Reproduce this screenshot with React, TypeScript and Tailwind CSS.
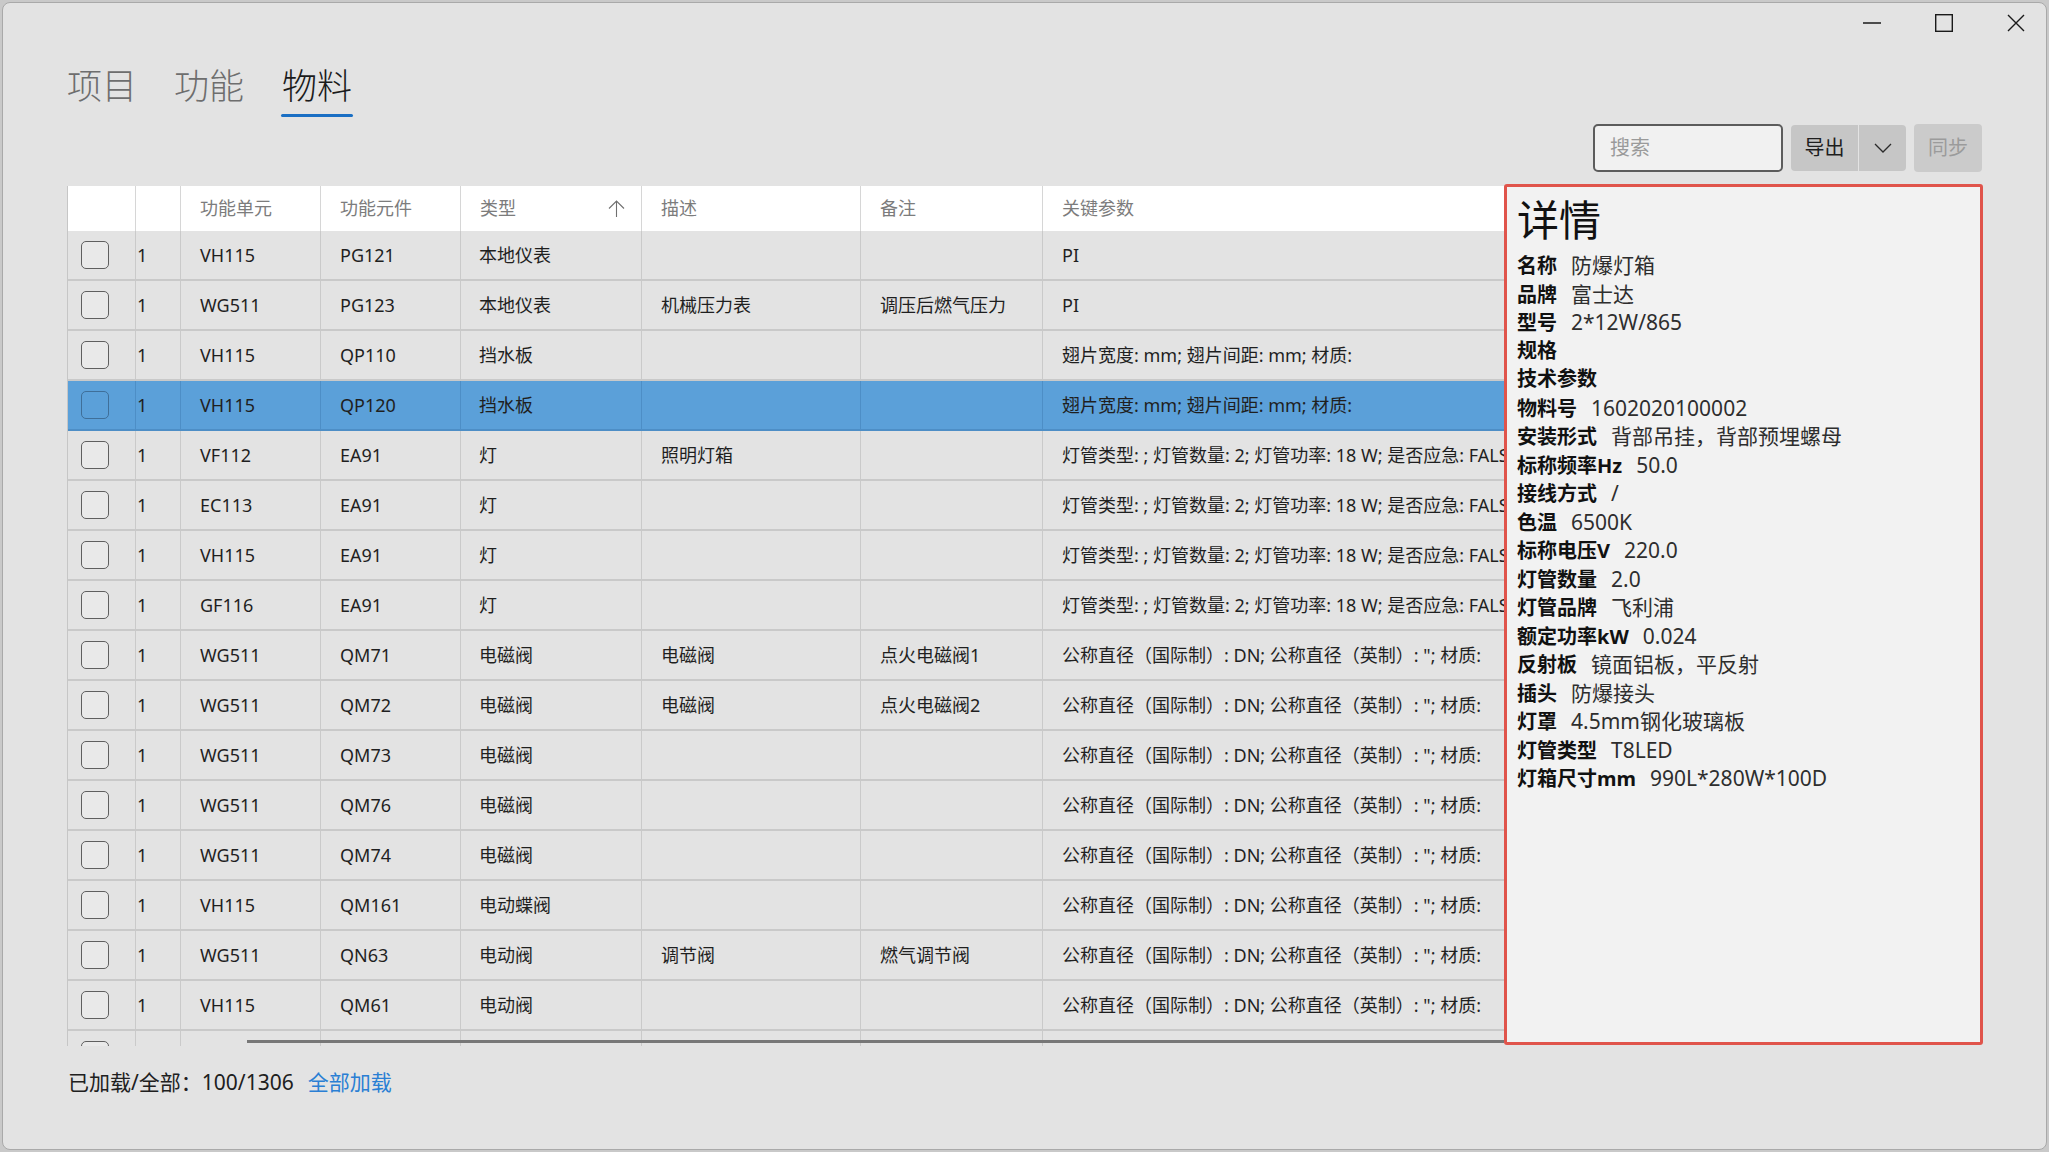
import { ReactNode } from "react";

type Row = {
  unit: string;
  part: string;
  type: string;
  desc: string;
  note: string;
  params: string;
  selected?: boolean;
};

const FIN = "翅片宽度: mm; 翅片间距: mm; 材质:";
const LAMP = "灯管类型: ; 灯管数量: 2; 灯管功率: 18 W; 是否应急: FALSE";
const VALVE = "公称直径（国际制）: DN; 公称直径（英制）: \"; 材质:";

const rows: Row[] = [
  { unit: "VH115", part: "PG121", type: "本地仪表", desc: "", note: "", params: "PI" },
  { unit: "WG511", part: "PG123", type: "本地仪表", desc: "机械压力表", note: "调压后燃气压力", params: "PI" },
  { unit: "VH115", part: "QP110", type: "挡水板", desc: "", note: "", params: FIN },
  { unit: "VH115", part: "QP120", type: "挡水板", desc: "", note: "", params: FIN, selected: true },
  { unit: "VF112", part: "EA91", type: "灯", desc: "照明灯箱", note: "", params: LAMP },
  { unit: "EC113", part: "EA91", type: "灯", desc: "", note: "", params: LAMP },
  { unit: "VH115", part: "EA91", type: "灯", desc: "", note: "", params: LAMP },
  { unit: "GF116", part: "EA91", type: "灯", desc: "", note: "", params: LAMP },
  { unit: "WG511", part: "QM71", type: "电磁阀", desc: "电磁阀", note: "点火电磁阀1", params: VALVE },
  { unit: "WG511", part: "QM72", type: "电磁阀", desc: "电磁阀", note: "点火电磁阀2", params: VALVE },
  { unit: "WG511", part: "QM73", type: "电磁阀", desc: "", note: "", params: VALVE },
  { unit: "WG511", part: "QM76", type: "电磁阀", desc: "", note: "", params: VALVE },
  { unit: "WG511", part: "QM74", type: "电磁阀", desc: "", note: "", params: VALVE },
  { unit: "VH115", part: "QM161", type: "电动蝶阀", desc: "", note: "", params: VALVE },
  { unit: "WG511", part: "QN63", type: "电动阀", desc: "调节阀", note: "燃气调节阀", params: VALVE },
  { unit: "VH115", part: "QM61", type: "电动阀", desc: "", note: "", params: VALVE },
  { unit: "", part: "", type: "", desc: "", note: "", params: "" },
];

const details: [string, string][] = [
  ["名称", "防爆灯箱"],
  ["品牌", "富士达"],
  ["型号", "2*12W/865"],
  ["规格", ""],
  ["技术参数", ""],
  ["物料号", "1602020100002"],
  ["安装形式", "背部吊挂，背部预埋螺母"],
  ["标称频率Hz", "50.0"],
  ["接线方式", "/"],
  ["色温", "6500K"],
  ["标称电压V", "220.0"],
  ["灯管数量", "2.0"],
  ["灯管品牌", "飞利浦"],
  ["额定功率kW", "0.024"],
  ["反射板", "镜面铝板，平反射"],
  ["插头", "防爆接头"],
  ["灯罩", "4.5mm钢化玻璃板"],
  ["灯管类型", "T8LED"],
  ["灯箱尺寸mm", "990L*280W*100D"],
];

function Cell({ w, sel, children, className = "" }: { w: string; sel?: boolean; children?: ReactNode; className?: string }) {
  return (
    <div
      className={`flex h-full shrink-0 items-center overflow-hidden whitespace-nowrap border-r ${
        sel ? "border-[#4d8ec6]" : "border-[#cacaca]"
      } ${w} ${className}`}
    >
      {children}
    </div>
  );
}

function HeadCell({ w, children }: { w: string; children?: ReactNode }) {
  return (
    <div className={`flex h-full shrink-0 items-center border-r border-[#d6d6d6] pl-[19px] ${w}`}>
      {children}
    </div>
  );
}

export default function App() {
  return (
    <div
      className="h-[1152px] w-[2049px] overflow-hidden bg-[#c9c9c9] p-[2px]"
      style={{ fontFamily: '"Noto Sans", "Noto Sans CJK SC", sans-serif' }}
    >
      <div className="flex h-[1148px] w-[2045px] flex-col overflow-hidden rounded-[8px] border border-[#a9a9a9] bg-[#e3e3e3]">

        {/* TITLE BAR */}
        <div className="flex h-[40px] items-center justify-end gap-[54px] pr-[21px]">
          <svg width="18" height="18" viewBox="0 0 18 18">
            <line x1="0" y1="9" x2="18" y2="9" stroke="#1a1a1a" strokeWidth="1.4" />
          </svg>
          <svg width="18" height="18" viewBox="0 0 18 18">
            <rect x="0.7" y="0.7" width="16.6" height="16.6" fill="none" stroke="#1a1a1a" strokeWidth="1.4" />
          </svg>
          <svg width="18" height="18" viewBox="0 0 18 18">
            <path d="M1 1 L17 17 M17 1 L1 17" stroke="#1a1a1a" strokeWidth="1.4" />
          </svg>
        </div>

        {/* TABS */}
        <div
          className="flex gap-[37px] pl-[64px] pt-[23px] font-light"
          style={{ fontFamily: '"Noto Sans CJK SC", sans-serif' }}
        >
          <div className="flex flex-col">
            <span className="text-[35px] leading-none text-[#6e6e6e]">项目</span>
          </div>
          <div className="flex flex-col">
            <span className="text-[35px] leading-none text-[#6e6e6e]">功能</span>
          </div>
          <div className="flex flex-col items-center">
            <span className="text-[35px] leading-none text-[#1b1b1b]">物料</span>
            <span className="mt-[13px] h-[3px] w-[72px] rounded-full bg-[#1a6fc4]" />
          </div>
        </div>

        {/* TOOLBAR */}
        <div className="mt-[7px] flex h-[48px] items-center justify-end gap-[8px] pr-[64px]">
          <div className="flex h-[48px] w-[190px] items-center rounded-[5px] border-2 border-[#5c5c5c] bg-[#f1f1f1] pl-[15px] text-[20px] text-[#9a9a9a]">
            搜索
          </div>
          <div className="flex h-[46px]">
            <div className="flex w-[67px] items-center justify-center rounded-l-[4px] bg-[#c6c6c6] text-[20px] text-[#1e1e1e]">
              导出
            </div>
            <div className="ml-[1px] flex w-[47px] items-center justify-center rounded-r-[4px] bg-[#c6c6c6]">
              <svg width="18" height="10" viewBox="0 0 18 10">
                <polyline points="1,1 9,9 17,1" fill="none" stroke="#2a2a2a" strokeWidth="1.3" />
              </svg>
            </div>
          </div>
          <div className="flex h-[48px] w-[68px] items-center justify-center rounded-[4px] bg-[#cbcbcb] text-[20px] text-[#9b9b9b]">
            同步
          </div>
        </div>

        {/* MAIN */}
        <div className="mt-[12px] flex items-start pl-[64px]">

          {/* TABLE */}
          <div className="relative h-[862px] w-[1437px] overflow-hidden pt-[2px] text-[18px] text-[#1f1f1f]">
            <div className="w-[1520px] border-l border-[#c6c6c6]">
              <div className="flex h-[45px] bg-white text-[#7c7c7c]">
                <HeadCell w="w-[68px]" />
                <HeadCell w="w-[45px]" />
                <HeadCell w="w-[140px]">功能单元</HeadCell>
                <HeadCell w="w-[140px]">功能元件</HeadCell>
                <div className="flex h-full w-[181px] shrink-0 items-center justify-between border-r border-[#d6d6d6] pl-[19px] pr-[16px]">
                  <span>类型</span>
                  <svg width="17" height="18" viewBox="0 0 17 18">
                    <path d="M8.5 1 V17 M1 8.5 L8.5 1 L16 8.5" fill="none" stroke="#6f6f6f" strokeWidth="1.1" />
                  </svg>
                </div>
                <HeadCell w="w-[219px]">描述</HeadCell>
                <HeadCell w="w-[182px]">备注</HeadCell>
                <HeadCell w="w-[545px]">关键参数</HeadCell>
              </div>

              {rows.map((r, i) => (
                <div
                  key={i}
                  className={`flex h-[50px] border-b-2 ${
                    r.selected ? "border-[#4d8ec6] bg-[#5ba0d9]" : "border-[#c9c9c9] bg-[#e3e3e3]"
                  }`}
                >
                  <Cell w="w-[68px]" sel={r.selected} className="pl-[13px]">
                    <span
                      className={`h-[28px] w-[28px] rounded-[5px] border-[1.5px] ${
                        r.selected ? "border-[#3f6f99] bg-[#5ba0d9]" : "border-[#5f5f5f] bg-[#e9e9e9]"
                      }`}
                    />
                  </Cell>
                  <Cell w="w-[45px]" sel={r.selected} className="pl-[1px]">{r.unit ? "1" : ""}</Cell>
                  <Cell w="w-[140px]" sel={r.selected} className="pl-[19px]">{r.unit}</Cell>
                  <Cell w="w-[140px]" sel={r.selected} className="pl-[19px]">{r.part}</Cell>
                  <Cell w="w-[181px]" sel={r.selected} className="pl-[18px]">{r.type}</Cell>
                  <Cell w="w-[219px]" sel={r.selected} className="pl-[19px]">{r.desc}</Cell>
                  <Cell w="w-[182px]" sel={r.selected} className="pl-[19px]">{r.note}</Cell>
                  <Cell w="w-[545px]" sel={r.selected} className="pl-[19px]">{r.params}</Cell>
                </div>
              ))}
            </div>

            {/* horizontal scrollbar */}
            <div className="absolute bottom-[3px] left-[180px] right-0 h-[3px] bg-[#777777]" />
          </div>

          {/* DETAIL PANEL */}
          <div className="h-[861px] w-[479px] shrink-0 rounded-[3px] border-[3px] border-[#e0544b] bg-[#f2f2f2] pl-[10px] pt-[10px]">
            <div
              className="mb-[12px] text-[42px] leading-none text-[#111]"
              style={{ fontFamily: '"Noto Sans CJK SC", sans-serif' }}
            >
              详情
            </div>
            {details.map(([label, value]) => (
              <div key={label} className="flex h-[28.5px] items-baseline whitespace-nowrap text-[20px] leading-[28.5px]">
                <span className="font-bold text-[#111]">{label}</span>
                {value && <span className="ml-[14px] text-[21px] leading-[28.5px] text-[#2e2e2e]">{value}</span>}
              </div>
            ))}
          </div>
        </div>

        {/* FOOTER */}
        <div className="mt-[22px] flex items-center gap-[14px] pl-[65px] text-[21px] leading-[28px]">
          <span className="text-[#202020]">已加载/全部：100/1306</span>
          <span className="text-[#2a7fd4]">全部加载</span>
        </div>
      </div>
    </div>
  );
}
